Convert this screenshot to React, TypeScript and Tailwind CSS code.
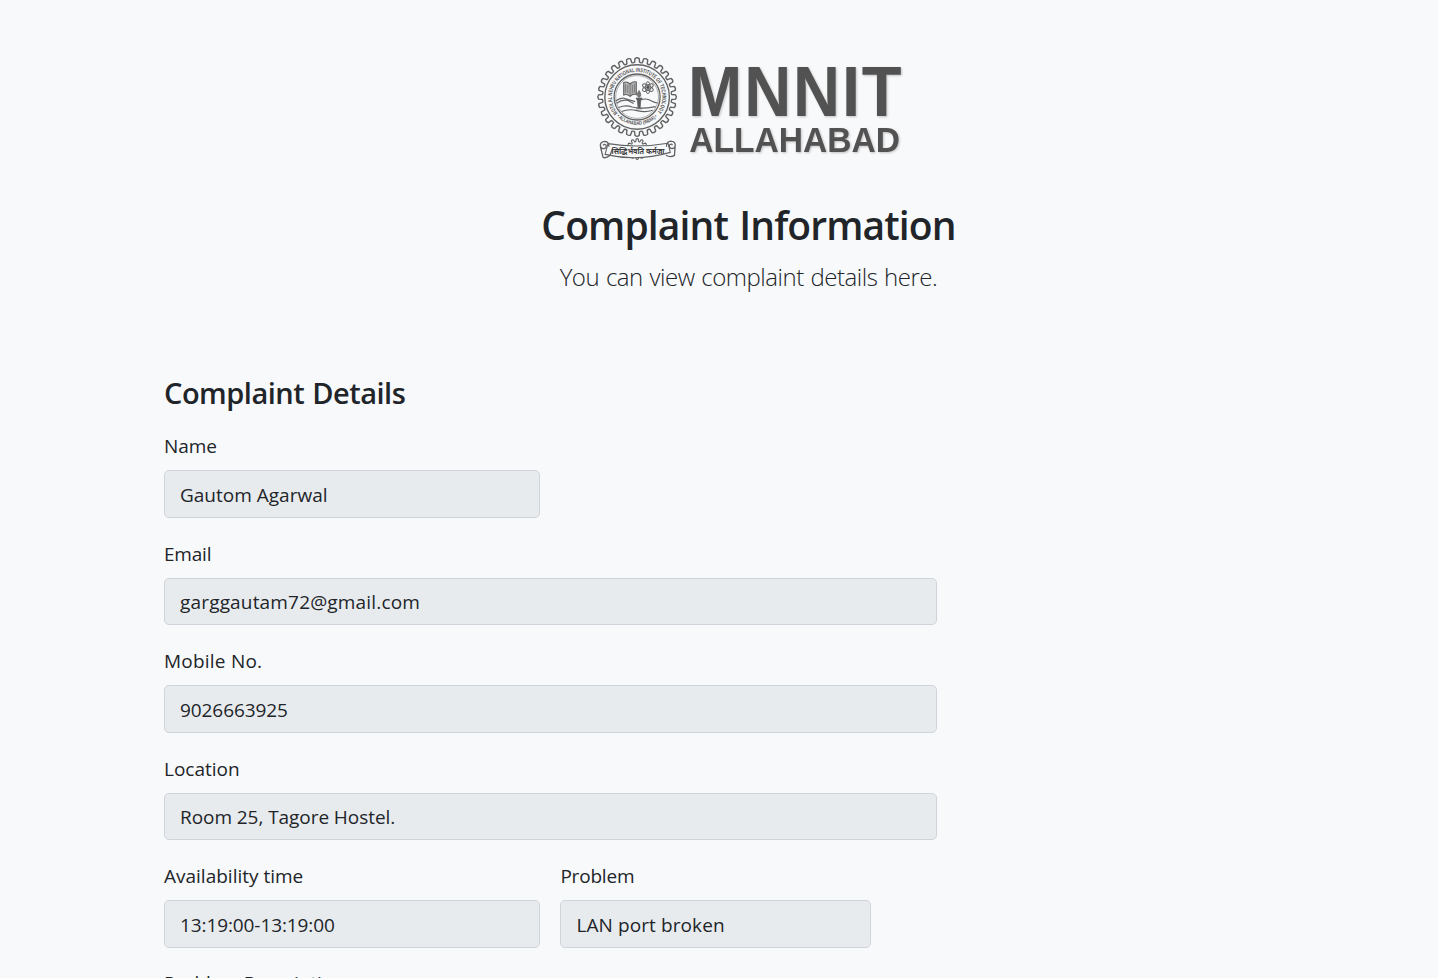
const TEETH = 28;

function gearPath(cx: number, cy: number, outer: number, root: number, teeth: number) {
  const step = (Math.PI * 2) / teeth;
  const at = (r: number, a: number) =>
    `${(cx + r * Math.cos(a)).toFixed(2)} ${(cy + r * Math.sin(a)).toFixed(2)}`;
  let d = "";
  for (let i = 0; i < teeth; i++) {
    const a = i * step - Math.PI / 2;
    d += `${i === 0 ? "M" : "L"}${at(root, a - step * 0.32)} L${at(outer - 0.8, a - step * 0.24)} Q${at(outer + 0.6, a)} ${at(outer - 0.8, a + step * 0.24)} L${at(root, a + step * 0.32)} Q${at(root - 0.8, a + step * 0.5)} ${at(root, a + step * 0.68)} `;
  }
  return d + "Z";
}

function Logo() {
  return (
    <svg
      className="h-[120px] w-[320px] overflow-visible"
      viewBox="588.5 50 320 120"
      fill="none"
      stroke="#626262"
      strokeWidth="0.9"
      role="img"
      aria-label="MNNIT Allahabad"
    >
      <defs>
        <path id="ringTop" d="M617.6 113.2 A25.2 25.2 0 1 1 656.4 113.2" />
        <path id="ringBottom" d="M613.5 112.5 A28.5 28.5 0 0 0 660.5 112.5" />
      </defs>

      <path d={gearPath(636.7, 149, 10.5, 7.8, 12)} strokeWidth="1.1" />
      <g transform="translate(-0.4 0)">
        <path d={gearPath(637, 97, 39.4, 34.8, TEETH)} fill="#f8f9fb" strokeWidth="1.4" />
        <circle cx="637" cy="97" r="32.3" strokeWidth="1.4" />
        <circle cx="637" cy="97" r="23" strokeWidth="1.3" />
        <circle cx="637" cy="97" r="21.4" strokeWidth="0.5" />

        <g fill="#505050" stroke="none" fontFamily="Liberation Sans, sans-serif" fontWeight="700">
          <text fontSize="5.8">
            <textPath href="#ringTop" textLength="112" lengthAdjust="spacingAndGlyphs">
              MOTILAL NEHRU NATIONAL INSTITUTE OF TECHNOLOGY
            </textPath>
          </text>
          <text fontSize="5">
            <textPath href="#ringBottom" startOffset="5" textLength="45" lengthAdjust="spacingAndGlyphs">
              • ALLAHABAD (INDIA) •
            </textPath>
          </text>
        </g>

        <path
          d="M623.6 82.4 Q627 81 630 84 Q633 81 636.2 82 V94.6 Q633 93.4 630 96.4 Q627 93.4 623.6 95 Z"
          fill="#b3b3b3"
          strokeWidth="1.1"
        />
        <path d="M630 84 V96 M625.5 84.5 V92.6 M627.7 84.8 V93 M632.2 84.8 V93.4 M634.3 84 V92.8" strokeWidth="0.7" />
        <g strokeWidth="1">
          <ellipse cx="647.8" cy="87.6" rx="6" ry="2.3" transform="rotate(30 647.8 87.6)" />
          <ellipse cx="647.8" cy="87.6" rx="6" ry="2.3" transform="rotate(90 647.8 87.6)" />
          <ellipse cx="647.8" cy="87.6" rx="6" ry="2.3" transform="rotate(150 647.8 87.6)" />
          <circle cx="647.8" cy="87.6" r="1.3" fill="#4a4a4a" />
        </g>
        <path
          d="M616.6 103.3 Q622 99 628 100.5 L633.5 103.5 M641.5 99.5 Q647 98 651 100.8 Q655 103 657.4 103 M615.6 101 Q620 97.6 624 98.2 L635 101.6 M618.5 107.4 Q626 104.6 632 107 Q640 109.4 655.6 106.6 M621.5 111.6 Q629 108.4 637 110.6 Q645 112.8 652.6 110.2"
          strokeWidth="1.1"
        />
        <path d="M639 90.4 C636 94.4 637 96.6 639 97.2 C641 96.6 641.4 94.4 639 90.4 Z" fill="#767676" strokeWidth="0.7" />
        <path d="M636 98 H642 L640.6 101 L640 108 H638 L637.4 101 Z M636 108.8 H642" fill="#5a5a5a" strokeWidth="0.8" />
      </g>

      <path
        d="M607.5 143.6 Q637 148.5 667.5 143.2 L669.8 152.4 Q637 162 604.6 154.4 Z"
        fill="#f8f9fb"
        strokeWidth="1.1"
      />
      <path
        d="M608.4 146.8 Q608.6 141.8 604.3 141.4 Q600 141.6 599.8 145.6 Q600.4 149.2 604 148.6 Q606.6 147.4 605.4 145 Q603.6 143.6 602.6 145.4 M600 147 L602.6 157.4 Q605.4 158.6 609.4 155.6 L611.6 150"
        strokeWidth="1.3"
      />
      <path
        d="M666 146.8 Q665.8 141.8 670 141.2 Q674.6 141.4 674.8 145.4 Q674.2 149 670.6 148.4 Q668 147.2 669.2 144.8 Q671 143.4 672 145.2 M674.6 146.8 L674 155.4 Q670 157.8 665.4 155.2"
        strokeWidth="1.3"
      />
      <text
        x="611"
        y="154.2"
        fontSize="8.2"
        fontWeight="700"
        fill="#3f3f3f"
        stroke="none"
        textLength="53"
        lengthAdjust="spacingAndGlyphs"
        fontFamily="Noto Sans Devanagari, Noto Sans, sans-serif"
      >
        सिद्धिर्भवति कर्मजा
      </text>

      <g
        className="drop-shadow-[1px_1.5px_1px_rgba(0,0,0,0.22)]"
        fill="#525252"
        stroke="none"
        fontFamily="Liberation Sans, Arial, sans-serif"
        fontWeight="700"
      >
        <text x="687.6" y="115.6" fontSize="69.5" letterSpacing="2" textLength="215.4" lengthAdjust="spacingAndGlyphs">
          MNNIT
        </text>
        <text x="688.8" y="151.6" fontSize="35.5" textLength="210.6" lengthAdjust="spacingAndGlyphs">
          ALLAHABAD
        </text>
      </g>
    </svg>
  );
}

type FieldProps = {
  label: string;
  value: string;
  width: string;
  labelTracking?: string;
  valueTracking?: string;
};

function Field({ label, value, width, labelTracking = "", valueTracking = "" }: FieldProps) {
  return (
    <div className={`mb-[21px] ${width}`}>
      <label className={`mb-[9px] block leading-[30px] ${labelTracking}`}>{label}</label>
      <div
        className={`h-[47.5px] rounded-[5px] border border-[#ced4da] bg-[#e8ebee] px-[15px] py-[8.5px] leading-[31px] whitespace-nowrap ${valueTracking}`}
      >
        {value}
      </div>
    </div>
  );
}

export default function App() {
  return (
    <div className="h-[978px] overflow-hidden bg-[#f8f9fb] font-['Open_Sans',sans-serif] text-[19px] text-[#212529]">
      <div className="ml-[164px] w-[1169px]">
        <header className="flex flex-col items-center pt-[50px] text-center">
          <Logo />
          <h1 className="mt-[31px] text-[39px] leading-[48px] font-semibold tracking-[-0.88px] [word-spacing:2px]">
            Complaint Information
          </h1>
          <p className="mt-[9px] text-[24px] leading-[37.5px] font-light tracking-[-0.48px] [word-spacing:1px]">
            You can view complaint details here.
          </p>
        </header>
        <main className="mt-[79px]">
          <h2 className="mb-[20.5px] text-[29px] leading-[36px] font-semibold tracking-[-0.5px] [word-spacing:1px]">
            Complaint Details
          </h2>
          <Field label="Name" value="Gautom Agarwal" width="w-[376px]" labelTracking="tracking-[-0.1px]" />
          <Field
            label="Email"
            value="garggautam72@gmail.com"
            width="w-[773px]"
            labelTracking="tracking-[-0.2px]"
            valueTracking="tracking-[0.17px]"
          />
          <Field
            label="Mobile No."
            value="9026663925"
            width="w-[773px]"
            labelTracking="tracking-[0.22px]"
            valueTracking="tracking-[-0.08px]"
          />
          <Field
            label="Location"
            value="Room 25, Tagore Hostel."
            width="w-[773px]"
            valueTracking="tracking-[-0.06px]"
          />
          <div className="-mb-px flex gap-[20.4px]">
            <Field
              label="Availability time"
              value="13:19:00-13:19:00"
              width="w-[376px]"
              valueTracking="tracking-[-0.1px]"
            />
            <Field
              label="Problem"
              value="LAN port broken"
              width="w-[310.5px]"
              labelTracking="tracking-[-0.2px]"
              valueTracking="tracking-[0.1px]"
            />
          </div>
          <Field label="Problem Description" value="" width="w-[773px]" labelTracking="tracking-[-0.05px]" />
        </main>
      </div>
    </div>
  );
}
